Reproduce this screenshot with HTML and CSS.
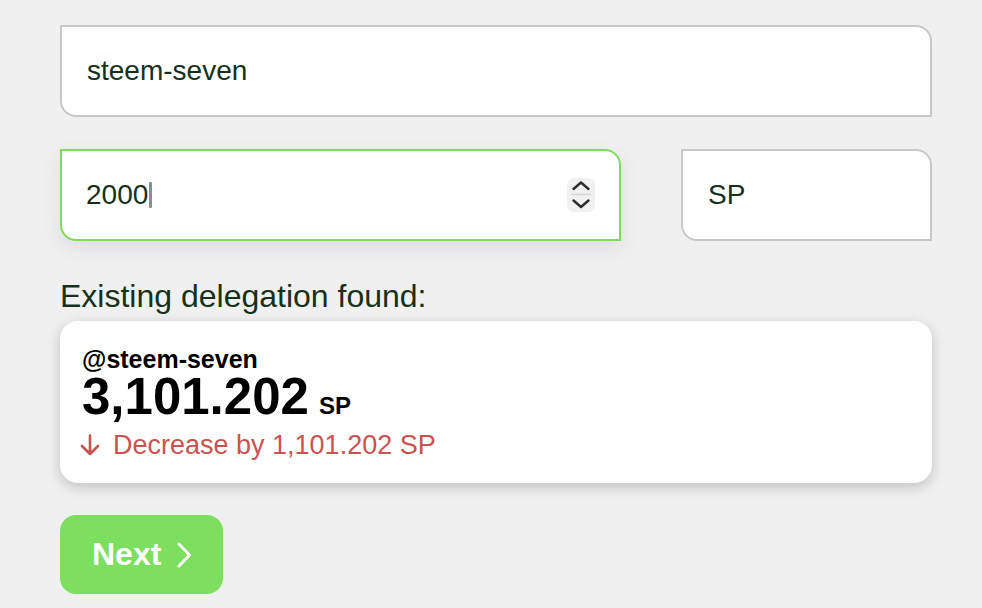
FILE: index.html
```html
<!DOCTYPE html>
<html lang="en">
<head>
<meta charset="utf-8">
<title>Delegate</title>
<link rel="stylesheet" href="styles.css">
</head>
<body>
<main class="page">
  <div class="field field--full"><span class="field-value">steem-seven</span></div>
  <div class="row">
    <div class="field field--amount field--focused">
      <span class="field-value">2000</span><span class="caret"></span>
      <svg class="spinner" width="28" height="34" viewBox="0 0 28 34" aria-hidden="true">
        <rect x="0" y="0" width="28" height="34" rx="7" fill="#f1f1f1"/>
        <path d="M6.5 11 L14 4.5 L21.5 11" fill="none" stroke="#2d2d2d" stroke-width="2.4" stroke-linecap="round" stroke-linejoin="round"/>
        <line x1="4" y1="16.5" x2="24" y2="16.5" stroke="#d6d6d6" stroke-width="1.5"/>
        <path d="M6.5 22.5 L14 29 L21.5 22.5" fill="none" stroke="#2d2d2d" stroke-width="2.4" stroke-linecap="round" stroke-linejoin="round"/>
      </svg>
    </div>
    <div class="field field--unit"><span class="field-value">SP</span></div>
  </div>
  <p class="label">Existing delegation found:</p>
  <section class="card">
    <div class="card-user">@steem-seven</div>
    <div class="card-amount">3,101.202<span class="card-unit">SP</span></div>
    <div class="card-change">
      <svg class="arrow" width="20" height="22" viewBox="0 0 20 22" aria-hidden="true">
        <path d="M10 1.5 V20 M2 12 L10 20 L18 12" fill="none" stroke="#c9534f" stroke-width="2.6" stroke-linecap="round" stroke-linejoin="round"/>
      </svg>
      <span>Decrease by 1,101.202 SP</span>
    </div>
  </section>
  <button class="next" type="button">
    <span>Next</span>
    <svg width="16" height="26" viewBox="0 0 16 26" aria-hidden="true">
      <path d="M3 2 L13.5 13 L3 24" fill="none" stroke="#fff" stroke-width="3" stroke-linecap="round" stroke-linejoin="round"/>
    </svg>
  </button>
</main>
</body>
</html>
```
FILE: styles.css
```css
html, body {
  margin: 0;
  padding: 0;
}
body {
  background: #f0f0f0;
  font-family: "Liberation Sans", Arial, Helvetica, sans-serif;
  color: #16301a;
}
.page {
  width: 872px;
  padding: 25px 0 0 60px;
  display: flex;
  flex-direction: column;
}
.field {
  height: 92px;
  box-sizing: border-box;
  border: 2px solid #c8c8c8;
  border-radius: 0 16px 0 16px;
  background: #fff;
  display: flex;
  align-items: center;
  padding: 0 24px 0 25px;
  font-size: 28px;
  color: #16301a;
}
.field--full {
  width: 872px;
}
.row {
  display: flex;
  gap: 60px;
  margin-top: 32px;
}
.field--amount {
  width: 561px;
  padding-left: 24px;
}
.field--unit {
  width: 251px;
}
.field--focused {
  border-color: #7ddc5e;
  box-shadow: 0 6px 18px rgba(90, 100, 150, 0.13);
}
.caret {
  display: inline-block;
  width: 3px;
  height: 26px;
  margin-left: 1px;
  background: #86918a;
  border-radius: 1px;
}
.spinner {
  margin-left: auto;
  display: block;
}
.label {
  margin: 36px 0 6px;
  font-size: 32px;
  line-height: 38px;
  color: #16301a;
}
.card {
  box-sizing: border-box;
  width: 872px;
  background: #fff;
  border-radius: 18px;
  padding: 26px 22px 25px;
  box-shadow: 0 4px 14px rgba(0, 0, 0, 0.2);
  color: #000;
}
.card-user {
  font-weight: bold;
  font-size: 25px;
  line-height: 24px;
}
.card-amount {
  font-weight: bold;
  font-size: 51px;
  line-height: 52px;
}
.card-unit {
  font-size: 24px;
  line-height: 1;
  margin-left: 10px;
}
.card-change {
  margin-top: 9px;
  display: flex;
  align-items: center;
  gap: 13px;
  font-size: 27px;
  line-height: 26px;
  color: #c9534f;
}
.arrow {
  display: block;
  margin-left: -2px;
}
.next {
  margin-top: 32px;
  width: 163px;
  height: 79px;
  box-sizing: border-box;
  border: none;
  border-radius: 16px;
  background: #7ddf5f;
  color: #fff;
  font-family: "Liberation Sans", Arial, Helvetica, sans-serif;
  font-weight: bold;
  font-size: 32px;
  display: flex;
  align-items: center;
  gap: 15px;
  padding: 0 0 0 32px;
  cursor: pointer;
}
.next svg {
  display: block;
}
```
